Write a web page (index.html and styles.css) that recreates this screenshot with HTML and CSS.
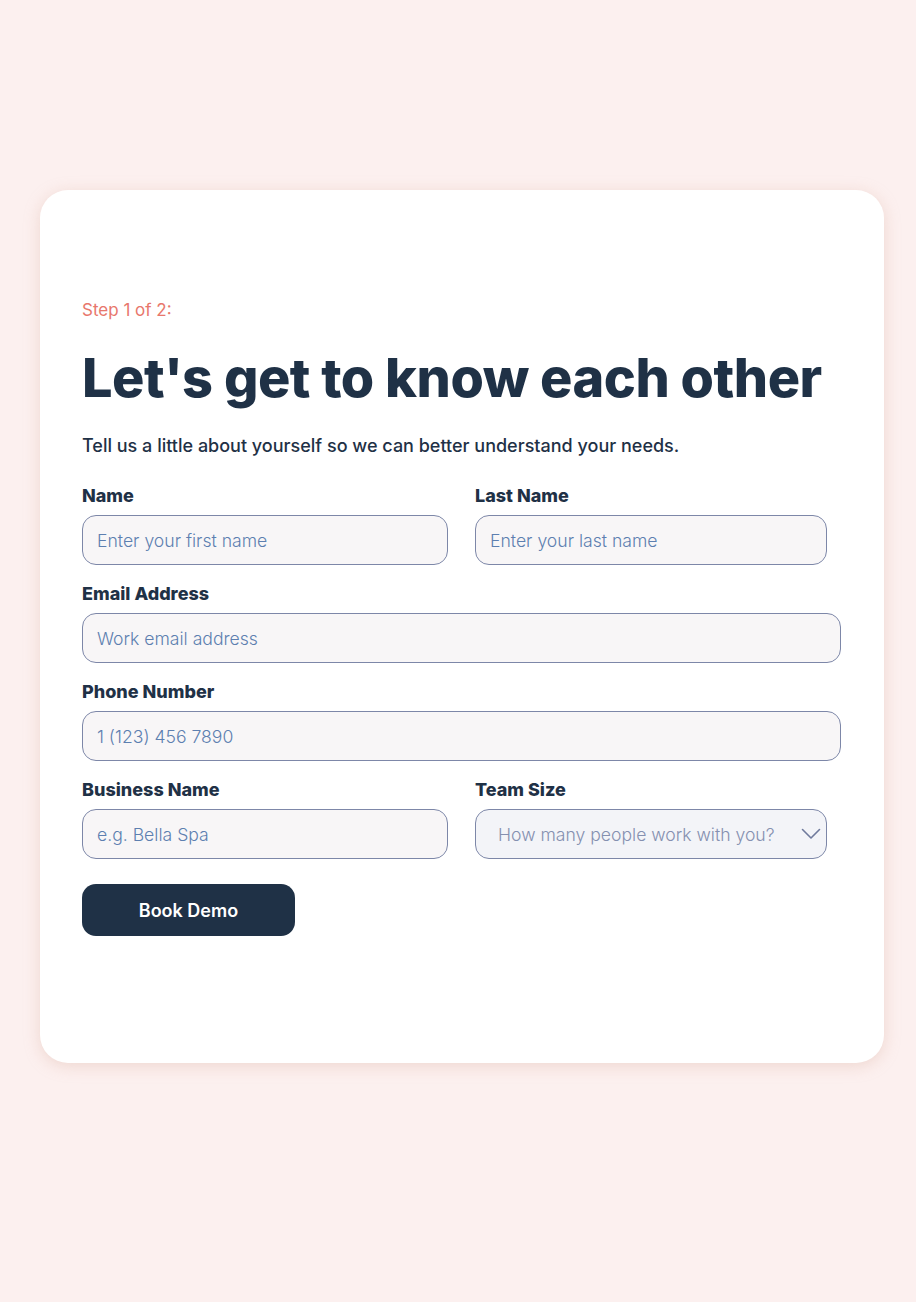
FILE: index.html
```html
<!DOCTYPE html>
<html lang="en">
  <head>
    <meta charset="UTF-8" />
    <meta name="viewport" content="width=device-width, initial-scale=1.0" />
    <title>Book a Demo</title>
    <link rel="stylesheet" href="styles.css">
  </head>
  <body>
    <div class="page">
      <div class="card">
        <p class="step">Step 1 of 2:</p>
        <h1>Let's get to know each other</h1>
        <p class="intro">Tell us a little about yourself so we can better understand your needs.</p>

        <form class="form">
          <div class="row split">
            <div class="field">
              <label for="firstName">Name</label>
              <input id="firstName" type="text" placeholder="Enter your first name" />
            </div>
            <div class="field">
              <label for="lastName">Last Name</label>
              <input id="lastName" type="text" placeholder="Enter your last name" />
            </div>
          </div>

          <div class="field">
            <label for="email">Email Address</label>
            <input id="email" type="email" placeholder="Work email address" />
          </div>

          <div class="field">
            <label for="phone">Phone Number</label>
            <input id="phone" type="tel" placeholder="1 (123) 456 7890" />
          </div>

          <div class="row split">
            <div class="field">
              <label for="business">Business Name</label>
              <input id="business" type="text" placeholder="e.g. Bella Spa" />
            </div>
            <div class="field">
              <label for="teamSize">Team Size</label>
              <div class="select-wrap">
                <select id="teamSize">
                  <option value="" selected disabled>How many people work with you?</option>
                  <option value="1">Just me</option>
                  <option value="2-5">2 - 5</option>
                  <option value="6-10">6 - 10</option>
                  <option value="11+">11+</option>
                </select>
                <svg class="chevron" width="20" height="12" viewBox="0 0 20 12" fill="none">
                  <path d="M1.5 1.5 L10 10 L18.5 1.5" stroke="#6f7a9c" stroke-width="1.6" stroke-linecap="round" stroke-linejoin="round" />
                </svg>
              </div>
            </div>
          </div>

          <button type="button" class="btn">Book Demo</button>
        </form>
      </div>
    </div>
  </body>
</html>
```

FILE: styles.css
```css
body {
  margin: 0;
  background-color: #fcf0ef;
  font-family: Inter, "Noto Sans", Arial, sans-serif;
  color: #1f3146;
}
.page {
  padding: 190px 0 239px 40px;
}
.card {
  width: 844px;
  box-sizing: border-box;
  background-color: white;
  border-radius: 28px;
  box-shadow: 0 3px 16px rgba(214, 165, 150, 0.35);
  padding: 108px 43px 127px 42px;
}
.step {
  margin: 0;
  font-size: 17px;
  line-height: 24px;
  color: #e8776c;
}
h1 {
  margin: 24px 0 0;
  font-size: 54px;
  line-height: 64px;
  font-weight: 800;
  letter-spacing: -0.5px;
}
.intro {
  margin: 24px 0 0;
  font-size: 18px;
  line-height: 24px;
  font-weight: 500;
}
.form {
  margin-top: 28px;
}
.row.split {
  display: grid;
  grid-template-columns: 366px 352px;
  column-gap: 27px;
}
.field {
  display: flex;
  flex-direction: column;
  gap: 10px;
  margin-bottom: 19px;
}
label {
  font-size: 18px;
  line-height: 19px;
  font-weight: 800;
}
input,
select {
  box-sizing: border-box;
  height: 50px;
  width: 100%;
  border: 1px solid #7d87a8;
  border-radius: 14px;
  background-color: #f8f6f7;
  padding: 0 14px;
  font-family: inherit;
  font-size: 17.6px;
  font-weight: 300;
  color: #1f3146;
}
input::placeholder {
  color: #5d7fb0;
}
.select-wrap {
  position: relative;
}
select {
  appearance: none;
  background-color: #f3f4f8;
  padding: 0 22px;
  color: #8590b0;
}
.chevron {
  position: absolute;
  right: 6px;
  top: 19px;
  pointer-events: none;
}
.btn {
  display: block;
  margin-top: 6px;
  width: 213px;
  height: 52px;
  border: none;
  border-radius: 14px;
  background-color: #1f3146;
  color: white;
  font-family: inherit;
  font-size: 18px;
  font-weight: 600;
  cursor: pointer;
}
```
